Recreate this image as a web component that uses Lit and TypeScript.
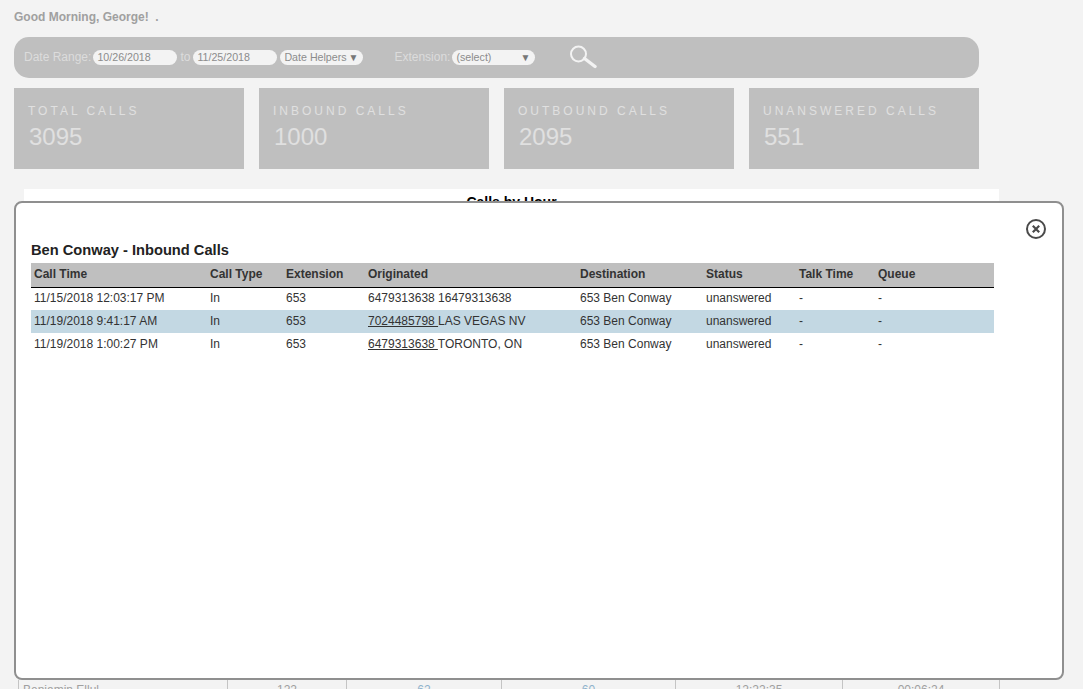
import { LitElement, css, html } from "lit";
import { customElement } from "lit/decorators.js";

const cards = [
  ["TOTAL CALLS", "3095"],
  ["INBOUND CALLS", "1000"],
  ["OUTBOUND CALLS", "2095"],
  ["UNANSWERED CALLS", "551"],
];

const calls = [
  { time: "11/15/2018 12:03:17 PM", num: "6479313638", place: " 16479313638", link: false, hi: false },
  { time: "11/19/2018 9:41:17 AM", num: "7024485798 ", place: "LAS VEGAS NV", link: true, hi: true },
  { time: "11/19/2018 1:00:27 PM", num: "6479313638 ", place: "TORONTO, ON", link: true, hi: false },
];

@customElement("app-root")
export class AppRoot extends LitElement {
  static styles = css`
    :host {
      display: block;
      position: relative;
      height: 689px;
      overflow: hidden;
      background: #f3f3f3;
      font-family: "Liberation Sans", Arial, sans-serif;
      font-size: 12px;
    }

    .page {
      padding: 10px 84px 0 14px;
    }

    .greeting {
      height: 27px;
      line-height: 14px;
      font-weight: bold;
      color: #a0a0a0;
      white-space: pre;
    }

    .filters {
      display: flex;
      align-items: center;
      width: 965px;
      height: 41px;
      box-sizing: border-box;
      padding-left: 10px;
      border-radius: 15px;
      background: #bfbfbf;
      color: #dcdcdc;
    }

    .label {
      padding-bottom: 2px;
    }

    .pill {
      display: flex;
      align-items: center;
      justify-content: space-between;
      box-sizing: border-box;
      height: 15px;
      margin-left: 3px;
      padding: 0 5px 1px 4px;
      border-radius: 8px;
      background: #f3f3f3;
      color: #8c8c8c;
      font-size: 10.67px;
    }

    .date { width: 84px; }
    .first { margin-left: 2px; }
    .helpers { width: 83px; }
    .ext { width: 83px; }
    .arrow { font-size: 10px; color: #777; }
    .to { margin-left: 3px; }
    .ext-label { margin-left: 31px; }
    .search { margin-left: 34px; margin-top: -1px; }

    .cards {
      display: flex;
      gap: 15px;
      margin-top: 10px;
    }

    .card {
      width: 230px;
      height: 81px;
      box-sizing: border-box;
      padding: 16px 14px 0;
      background: #bfbfbf;
      color: #e0e0e0;
    }

    .card-label {
      line-height: 15px;
      letter-spacing: 3px;
      white-space: nowrap;
    }

    .card-value {
      margin-top: 4px;
      padding-left: 1px;
      line-height: 28px;
      font-size: 24px;
    }

    .chart {
      width: 975px;
      height: 491px;
      margin: 20px 0 0 10px;
      box-sizing: border-box;
      padding-top: 5px;
      background: #fff;
      color: #000;
      font-size: 14px;
      font-weight: bold;
      text-align: center;
    }

    .behind {
      display: grid;
      grid-template-columns: 210px 119px 155px 174px 167px 157px;
      width: 983px;
      margin-left: 4px;
      color: #a0a0a0;
      font-size: 12px;
      line-height: 14px;
      text-align: center;
    }

    .behind div {
      height: 30px;
      padding-top: 3px;
      box-sizing: border-box;
      border-right: 1px solid #c4c4c4;
    }

    .behind div:first-child {
      padding-left: 4px;
      border-left: 1px solid #c4c4c4;
      text-align: left;
    }

    .behind .blue { color: #8fb2cc; }

    .modal {
      position: absolute;
      left: 14px;
      top: 201px;
      width: 1050px;
      height: 479px;
      box-sizing: border-box;
      padding: 38px 15px 0;
      border: 2px solid #8f8f8f;
      border-radius: 8px;
      background: #fff;
      color: #333;
    }

    .close {
      position: absolute;
      right: 15px;
      top: 15px;
      display: block;
    }

    h2 {
      margin: 0 0 3px;
      line-height: 19px;
      font-size: 14.67px;
      font-weight: bold;
      color: #222;
    }

    table {
      width: 963px;
      border-collapse: collapse;
      table-layout: fixed;
      color: #333;
    }

    th, td {
      height: 23px;
      padding: 0 0 2px 3px;
      box-sizing: border-box;
      text-align: left;
      white-space: pre;
    }

    th {
      height: 24px;
      padding-bottom: 1px;
      background: #bfbfbf;
      border-bottom: 1px solid #000;
      font-weight: bold;
    }

    tr.hi td { background: #c3d8e3; }

    .c1 { width: 176px; }
    .c2 { width: 76px; }
    .c3 { width: 82px; }
    .c4 { width: 212px; }
    .c5 { width: 126px; }
    .c6 { width: 93px; }
    .c7 { width: 79px; }

    a {
      color: inherit;
      text-decoration: underline;
    }
  `;

  render() {
    return html`
      <div class="page">
        <div class="greeting">Good Morning, George!  .</div>
        <div class="filters">
          <span class="label">Date Range:</span>
          <span class="pill date first">10/26/2018</span>
          <span class="label to">to</span>
          <span class="pill date">11/25/2018</span>
          <span class="pill helpers">Date Helpers <span class="arrow">▼</span></span>
          <span class="label ext-label">Extension:</span>
          <span class="pill ext first">(select) <span class="arrow">▼</span></span>
          <svg class="search" width="28" height="24" viewBox="0 0 28 24" fill="none" stroke="#f3f3f3">
            <circle cx="9.5" cy="9" r="7.5" stroke-width="2" />
            <path d="M15.5 13.5 L26 21.5" stroke-width="3.4" stroke-linecap="round" />
          </svg>
        </div>
        <div class="cards">
          ${cards.map(
            ([label, value]) => html`
              <div class="card">
                <div class="card-label">${label}</div>
                <div class="card-value">${value}</div>
              </div>
            `
          )}
        </div>
        <div class="chart">Calls by Hour</div>
        <div class="behind">
          <div>Benjamin Ellul</div>
          <div>122</div>
          <div class="blue">62</div>
          <div class="blue">60</div>
          <div>12:22:35</div>
          <div>00:06:24</div>
        </div>
      </div>

      <div class="modal">
        <svg class="close" width="22" height="22" viewBox="0 0 22 22" fill="none" stroke="#4a4a4a">
          <circle cx="11" cy="11" r="9" stroke-width="2" />
          <path d="M7.8 7.8 L14.2 14.2 M14.2 7.8 L7.8 14.2" stroke-width="2.2" />
        </svg>
        <h2>Ben Conway - Inbound Calls</h2>
        <table>
          <thead>
            <tr>
              <th class="c1">Call Time</th>
              <th class="c2">Call Type</th>
              <th class="c3">Extension</th>
              <th class="c4">Originated</th>
              <th class="c5">Destination</th>
              <th class="c6">Status</th>
              <th class="c7">Talk Time</th>
              <th>Queue</th>
            </tr>
          </thead>
          <tbody>
            ${calls.map(
              (c) => html`
                <tr class=${c.hi ? "hi" : ""}>
                  <td>${c.time}</td>
                  <td>In</td>
                  <td>653</td>
                  <td>${c.link ? html`<a>${c.num}</a>` : c.num}${c.place}</td>
                  <td>653 Ben Conway</td>
                  <td>unanswered</td>
                  <td>-</td>
                  <td>-</td>
                </tr>
              `
            )}
          </tbody>
        </table>
      </div>
    `;
  }
}
